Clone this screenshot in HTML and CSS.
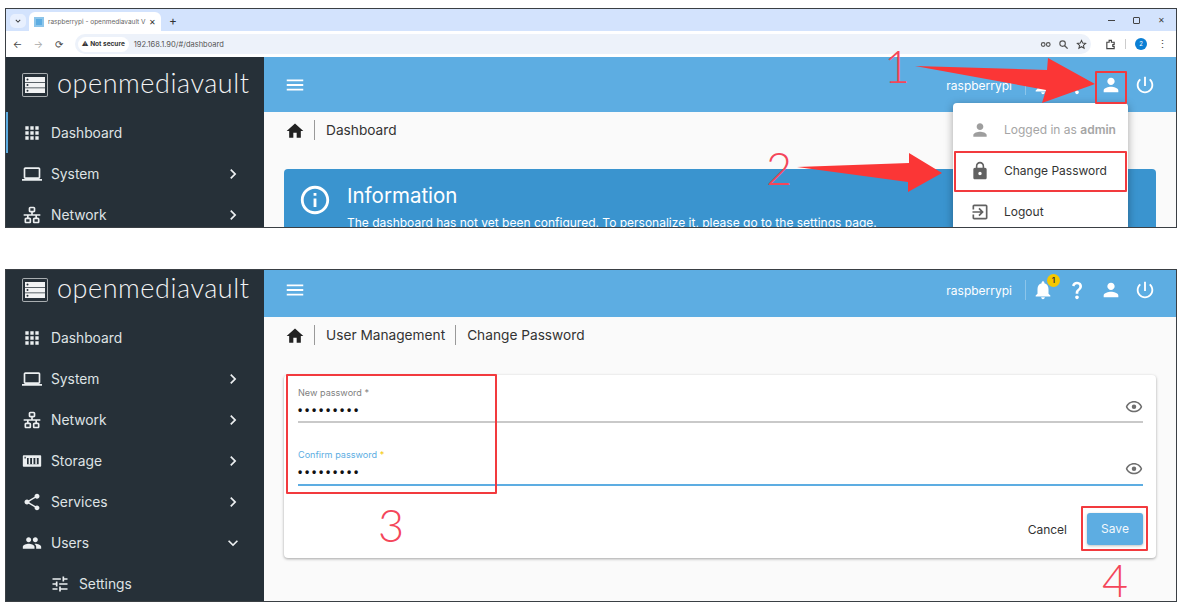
FILE: index.html
```html
<!doctype html>
<html lang="en">
<head>
	<meta charset="utf-8">
	<title>openmediavault change password</title>
	<link rel="stylesheet" href="styles.css">
</head>

<body>
	<svg class="defs" aria-hidden="true">
		<symbol id="i-apps" viewBox="0 0 24 24"><path d="M4 8h4V4H4v4zm6 12h4v-4h-4v4zm-6 0h4v-4H4v4zm0-6h4v-4H4v4zm6 0h4v-4h-4v4zm6-10v4h4V4h-4zm-6 4h4V4h-4v4zm6 6h4v-4h-4v4zm0 6h4v-4h-4v4z"/></symbol>
		<symbol id="i-laptop" viewBox="0 0 24 24"><path d="M20 18c1.1 0 1.99-.9 1.99-2L22 6c0-1.1-.9-2-2-2H4c-1.1 0-2 .9-2 2v10c0 1.1.9 2 2 2H0v2h24v-2h-4zM4 6h16v10H4V6z"/></symbol>
		<symbol id="i-lan" viewBox="0 0 24 24"><path d="M10,2C8.89,2 8,2.89 8,4V7C8,8.11 8.89,9 10,9H11V11H2V13H6V15H5C3.89,15 3,15.89 3,17V20C3,21.11 3.89,22 5,22H9C10.11,22 11,21.11 11,20V17C11,15.89 10.11,15 9,15H8V13H16V15H15C13.89,15 13,15.89 13,17V20C13,21.11 13.89,22 15,22H19C20.11,22 21,21.11 21,20V17C21,15.89 20.11,15 19,15H18V13H22V11H13V9H14C15.11,9 16,8.11 16,7V4C16,2.89 15.11,2 14,2H10M10,4H14V7H10V4M5,17H9V20H5V17M15,17H19V20H15V17Z"/></symbol>
		<symbol id="i-storage" viewBox="0 0 24 24"><path fill-rule="evenodd" d="M2 5h20c.6 0 1 .4 1 1v12c0 .6-.4 1-1 1H2c-.6 0-1-.4-1-1V6c0-.6.4-1 1-1zm4 3.5V16h14V8.5H6zM3 7v2h1.5V7H3z"/><rect x="8" y="8.5" width="1.8" height="7.5"/><rect x="12" y="8.5" width="1.8" height="7.5"/><rect x="16" y="8.5" width="1.8" height="7.5"/></symbol>
		<symbol id="i-share" viewBox="0 0 24 24"><path d="M18 16.08c-.76 0-1.44.3-1.96.77L8.91 12.7c.05-.23.09-.46.09-.7s-.04-.47-.09-.7l7.05-4.11c.54.5 1.25.81 2.04.81 1.66 0 3-1.34 3-3s-1.34-3-3-3-3 1.34-3 3c0 .24.04.47.09.7L8.04 9.81C7.5 9.31 6.79 9 6 9c-1.66 0-3 1.34-3 3s1.34 3 3 3c.79 0 1.5-.31 2.04-.81l7.12 4.16c-.05.21-.08.43-.08.65 0 1.61 1.31 2.92 2.92 2.92 1.61 0 2.92-1.31 2.92-2.92s-1.31-2.92-2.92-2.92z"/></symbol>
		<symbol id="i-group" viewBox="0 0 24 24"><path d="M16 11c1.66 0 2.99-1.34 2.99-3S17.66 5 16 5c-1.66 0-3 1.34-3 3s1.34 3 3 3zm-8 0c1.66 0 2.99-1.34 2.99-3S9.66 5 8 5C6.34 5 5 6.34 5 8s1.34 3 3 3zm0 2c-2.33 0-7 1.17-7 3.5V19h14v-2.5c0-2.33-4.67-3.5-7-3.5zm8 0c-.29 0-.62.02-.97.05 1.16.84 1.97 1.97 1.97 3.45V19h6v-2.5c0-2.33-4.67-3.5-7-3.5z"/></symbol>
		<symbol id="i-tune" viewBox="0 0 24 24"><path d="M3 17v2h6v-2H3zM3 5v2h10V5H3zm10 16v-2h8v-2h-8v-2h-2v6h2zM7 9v2H3v2h4v2h2V9H7zm14 4v-2H11v2h10zm-6-4h2V7h4V5h-4V3h-2v6z"/></symbol>
		<symbol id="i-right" viewBox="0 0 24 24"><path d="M10 6L8.59 7.41 13.17 12l-4.58 4.59L10 18l6-6z"/></symbol>
		<symbol id="i-down" viewBox="0 0 24 24"><path d="M16.59 8.59L12 13.17 7.41 8.59 6 10l6 6 6-6z"/></symbol>
		<symbol id="i-menu" viewBox="0 0 24 24"><path d="M3 18h18v-2H3v2zm0-5h18v-2H3v2zm0-7v2h18V6H3z"/></symbol>
		<symbol id="i-home" viewBox="0 0 24 24"><path d="M10 20v-6h4v6h5v-8h3L12 3 2 12h3v8z"/></symbol>
		<symbol id="i-person" viewBox="0 0 24 24"><path d="M12 12c2.21 0 4-1.79 4-4s-1.79-4-4-4-4 1.79-4 4 1.79 4 4 4zm0 2c-2.67 0-8 1.34-8 4v2h16v-2c0-2.66-5.33-4-8-4z"/></symbol>
		<symbol id="i-lock" viewBox="0 0 24 24"><path d="M18 8h-1V6c0-2.76-2.24-5-5-5S7 3.24 7 6v2H6c-1.1 0-2 .9-2 2v10c0 1.1.9 2 2 2h12c1.1 0 2-.9 2-2V10c0-1.1-.9-2-2-2zm-6 9c-1.1 0-2-.9-2-2s.9-2 2-2 2 .9 2 2-.9 2-2 2zm3.1-9H8.9V6c0-1.71 1.39-3.1 3.1-3.1 1.71 0 3.1 1.39 3.1 3.1v2z"/></symbol>
		<symbol id="i-logout" viewBox="0 0 24 24"><path d="M10.09 15.59L11.5 17l5-5-5-5-1.41 1.41L12.67 11H3v2h9.67l-2.58 2.59zM19 3H5c-1.11 0-2 .9-2 2v4h2V5h14v14H5v-4H3v4c0 1.1.89 2 2 2h14c1.1 0 2-.9 2-2V5c0-1.1-.9-2-2-2z"/></symbol>
		<symbol id="i-power" viewBox="0 0 24 24"><path d="M13 3h-2v10h2V3zm4.83 2.17l-1.42 1.42C17.99 7.86 19 9.81 19 12c0 3.87-3.13 7-7 7s-7-3.13-7-7c0-2.19 1.01-4.14 2.58-5.42L6.17 5.17C4.23 6.82 3 9.26 3 12c0 4.97 4.03 9 9 9s9-4.03 9-9c0-2.74-1.23-5.18-3.17-6.83z"/></symbol>
		<symbol id="i-bell" viewBox="0 0 24 24"><path d="M12 22c1.1 0 2-.9 2-2h-4c0 1.1.89 2 2 2zm6-6v-5c0-3.07-1.64-5.64-4.5-6.32V4c0-.83-.67-1.5-1.5-1.5s-1.5.67-1.5 1.5v.68C7.63 5.36 6 7.92 6 11v5l-2 2v1h16v-1l-2-2z"/></symbol>
		<symbol id="i-help" viewBox="0 0 24 24"><path d="M11.07 12.85c.77-1.39 2.25-2.21 3.11-3.44.91-1.29.4-3.7-2.18-3.7-1.69 0-2.52 1.28-2.87 2.34L6.54 6.96C7.25 4.83 9.18 3 11.99 3c2.35 0 3.96 1.07 4.78 2.41.7 1.15 1.11 3.3.03 4.9-1.2 1.77-2.35 2.31-2.97 3.45-.25.46-.35.76-.35 2.24h-2.89c-.01-.78-.13-2.05.48-3.15zM14 20c0 1.1-.9 2-2 2s-2-.9-2-2 .9-2 2-2 2 .9 2 2z"/></symbol>
		<symbol id="i-eye" viewBox="0 0 24 24"><path d="M12 6c3.79 0 7.17 2.13 8.82 5.5C19.17 14.87 15.79 17 12 17s-7.17-2.13-8.82-5.5C4.83 8.13 8.21 6 12 6m0-2C7 4 2.73 7.11 1 11.5 2.73 15.89 7 19 12 19s9.27-3.11 11-7.5C21.27 7.11 17 4 12 4z"/><circle cx="12" cy="11.5" r="3"/></symbol>
		<symbol id="i-info" viewBox="0 0 24 24"><path d="M11 7h2v2h-2zm0 4h2v6h-2zm1-9C6.48 2 2 6.48 2 12s4.48 10 10 10 10-4.48 10-10S17.52 2 12 2zm0 18c-4.41 0-8-3.59-8-8s3.59-8 8-8 8 3.59 8 8-3.59 8-8 8z"/></symbol>
		<symbol id="i-logo" viewBox="0 0 26 24"><path fill-rule="evenodd" fill="#a9aeb1" d="M2 0h22c1.1 0 2 .9 2 2v20c0 1.1-.9 2-2 2H2c-1.1 0-2-.9-2-2V2C0 .9.9 0 2 0zm0 1c-.6 0-1 .4-1 1v20c0 .6.4 1 1 1h22c.6 0 1-.4 1-1V2c0-.6-.4-1-1-1H2z"/><path fill-rule="evenodd" fill="#f2f3f4" d="M3 4h20v5H3V4zm0 5.8h20v4.6H3V9.8zm0 5.4h20V20H3v-4.800zM5.500 5.500a1 1 0 1 0 0 2 1 1 0 0 0 0-2zm0 5.600a1 1 0 1 0 0 2 1 1 0 0 0 0-2zm0 5.600a1 1 0 1 0 0 2 1 1 0 0 0 0-2z"/></symbol>
	</svg>

	<div class="page">
		<!-- first screenshot: dashboard with user menu -->
		<section class="shot shotTop">
			<div class="tabStrip">
				<span class="tabList"><svg class="ico10"><use href="#i-down"/></svg></span>
				<div class="tab">
					<span class="favicon"></span>
					<span class="tabTitle">raspberrypi - openmediavault V</span>
					<span class="tabClose">✕</span>
				</div>
				<span class="newTab">+</span>
				<div class="winControls">
					<span class="winMin"></span>
					<span class="winMax"></span>
					<span class="winClose">✕</span>
				</div>
			</div>
			<div class="toolbar">
				<span class="navBtn">←</span>
				<span class="navBtn faded">→</span>
				<span class="navBtn">⟳</span>
				<div class="omnibox">
					<span class="chip">⚠ <b>Not secure</b></span>
					<span class="url">192.168.1.90/#/dashboard</span>
					<span class="omniIcons">
						<svg class="ico11" viewBox="0 0 24 24"><circle cx="7" cy="12" r="4" fill="none" stroke="#555" stroke-width="2.5"/><circle cx="18" cy="12" r="4" fill="none" stroke="#555" stroke-width="2.5"/></svg>
						<svg class="ico11" viewBox="0 0 24 24"><circle cx="10" cy="10" r="6" fill="none" stroke="#555" stroke-width="2.5"/><path d="M14 14l7 7" stroke="#555" stroke-width="3"/></svg>
						<svg class="ico11" viewBox="0 0 24 24"><path d="M12 3l2.7 6 6.3.6-4.800 4.200 1.500 6.400L12 16.800 6.300 20.200l1.500-6.400L3 9.600 9.300 9z" fill="none" stroke="#444" stroke-width="2.2"/></svg>
					</span>
				</div>
				<div class="toolIcons">
					<svg class="ico11" viewBox="0 0 24 24"><path d="M4 7h5V3h5v4h6v5h-3v4h3v5H4z" fill="none" stroke="#444" stroke-width="2.5"/></svg>
					<span class="toolSep"></span>
					<span class="avatar">2</span>
					<span class="kebab">⋮</span>
				</div>
			</div>

			<div class="app">
				<aside class="sidebar">
					<div class="brand"><svg class="brandIcon"><use href="#i-logo"/></svg><span class="brandName">openmediavault</span></div>
					<nav>
						<a class="navRow active"><svg class="ico20"><use href="#i-apps"/></svg><span>Dashboard</span></a>
						<a class="navRow"><svg class="ico20"><use href="#i-laptop"/></svg><span>System</span><svg class="chev"><use href="#i-right"/></svg></a>
						<a class="navRow"><svg class="ico20"><use href="#i-lan"/></svg><span>Network</span><svg class="chev"><use href="#i-right"/></svg></a>
					</nav>
				</aside>
				<main class="main">
					<header class="topbar">
						<svg class="ico22"><use href="#i-menu"/></svg>
						<div class="topRight">
							<span class="hostname">raspberrypi</span>
							<span class="topSep"></span>
							<span class="bell"><svg class="ico22"><use href="#i-bell"/></svg><span class="badge">1</span></span>
							<svg class="ico22"><use href="#i-help"/></svg>
							<svg class="ico22"><use href="#i-person"/></svg>
							<svg class="ico22"><use href="#i-power"/></svg>
						</div>
					</header>
					<div class="crumbs">
						<svg class="ico20 homeIcon"><use href="#i-home"/></svg>
						<span class="crumb">Dashboard</span>
					</div>
					<div class="alert">
						<svg class="alertIcon"><use href="#i-info"/></svg>
						<div>
							<h2>Information</h2>
							<p>The dashboard has not yet been configured. To personalize it, please go to the settings page.</p>
						</div>
					</div>
				</main>
			</div>

			<div class="userMenu">
				<div class="menuRow muted"><svg class="ico20"><use href="#i-person"/></svg><span>Logged in as <b>admin</b></span></div>
				<div class="menuRow"><svg class="ico20"><use href="#i-lock"/></svg><span>Change Password</span></div>
				<div class="menuRow"><svg class="ico20"><use href="#i-logout"/></svg><span>Logout</span></div>
			</div>
		</section>

		<!-- second screenshot: change password form -->
		<section class="shot shotBottom">
			<div class="app">
				<aside class="sidebar">
					<div class="brand"><svg class="brandIcon"><use href="#i-logo"/></svg><span class="brandName">openmediavault</span></div>
					<nav>
						<a class="navRow"><svg class="ico20"><use href="#i-apps"/></svg><span>Dashboard</span></a>
						<a class="navRow"><svg class="ico20"><use href="#i-laptop"/></svg><span>System</span><svg class="chev"><use href="#i-right"/></svg></a>
						<a class="navRow"><svg class="ico20"><use href="#i-lan"/></svg><span>Network</span><svg class="chev"><use href="#i-right"/></svg></a>
						<a class="navRow"><svg class="ico20"><use href="#i-storage"/></svg><span>Storage</span><svg class="chev"><use href="#i-right"/></svg></a>
						<a class="navRow"><svg class="ico20"><use href="#i-share"/></svg><span>Services</span><svg class="chev"><use href="#i-right"/></svg></a>
						<a class="navRow"><svg class="ico20"><use href="#i-group"/></svg><span>Users</span><svg class="chev"><use href="#i-down"/></svg></a>
						<a class="navRow sub"><svg class="ico20"><use href="#i-tune"/></svg><span>Settings</span></a>
					</nav>
				</aside>
				<main class="main">
					<header class="topbar">
						<svg class="ico22"><use href="#i-menu"/></svg>
						<div class="topRight">
							<span class="hostname">raspberrypi</span>
							<span class="topSep"></span>
							<span class="bell"><svg class="ico22"><use href="#i-bell"/></svg><span class="badge">1</span></span>
							<svg class="ico22"><use href="#i-help"/></svg>
							<svg class="ico22"><use href="#i-person"/></svg>
							<svg class="ico22"><use href="#i-power"/></svg>
						</div>
					</header>
					<div class="crumbs">
						<svg class="ico20 homeIcon"><use href="#i-home"/></svg>
						<span class="crumb">User Management</span>
						<span class="crumb">Change Password</span>
					</div>
					<form class="formCard">
						<div class="field">
							<div class="fieldText">
								<label>New password *</label>
								<span class="dots">•••••••••</span>
							</div>
							<svg class="eye"><use href="#i-eye"/></svg>
						</div>
						<div class="field focused">
							<div class="fieldText">
								<label>Confirm password <i>*</i></label>
								<span class="dots">•••••••••</span>
							</div>
							<svg class="eye"><use href="#i-eye"/></svg>
						</div>
						<div class="formActions">
							<span class="btnCancel">Cancel</span>
							<span class="btnSave">Save</span>
						</div>
					</form>
				</main>
			</div>
		</section>

		<!-- annotations drawn over the screenshots -->
		<svg class="arrows" viewBox="0 0 1182 607">
			<polygon points="915,66 1047,70 1048,58 1095,84 1042,103 1046,90"/>
			<polygon points="797,167 909,163 909,153 942,173 908,192 908,182"/>
		</svg>
		<span class="redBox boxUser"></span>
		<span class="redBox boxChange"></span>
		<span class="redBox boxFields"></span>
		<span class="redBox boxSave"></span>
		<span class="stepNo no1">1</span>
		<span class="stepNo no2">2</span>
		<span class="stepNo no3">3</span>
		<span class="stepNo no4">4</span>
	</div>
</body>
</html>
```
FILE: styles.css
```css
* {
	margin: 0;
	padding: 0;
	box-sizing: border-box;
}

body {
	background-color: #fff;
	font-family: Inter, "Liberation Sans", sans-serif;
	overflow: hidden;
}

.defs {
	width: 0;
	height: 0;
	display: block;
}

.page {
	position: relative;
	width: 1182px;
	height: 607px;
	padding: 8px 5px 0;
	display: flex;
	flex-direction: column;
	gap: 41px;
}

.shot {
	position: relative;
	border: 1px solid #3a3f44;
	overflow: hidden;
	background-color: #fafafa;
}
.shotTop {
	height: 220px;
}
.shotBottom {
	height: 333px;
}
.shotBottom .app {
	margin-top: -8px;
	height: 340px;
}

/* browser chrome */
.tabStrip {
	height: 22px;
	background-color: #d3e3fd;
	display: flex;
	align-items: flex-end;
}
.tabList {
	width: 16px;
	height: 14px;
	margin: 0 3px 3px 4px;
	border-radius: 5px;
	background-color: #e8f0fe;
	display: flex;
	align-items: center;
	justify-content: center;
}
.tab {
	width: 132px;
	height: 19px;
	background-color: #fff;
	border-radius: 6px 6px 0 0;
	display: flex;
	align-items: center;
	padding: 0 5px;
}
.favicon {
	width: 10px;
	height: 10px;
	margin-right: 4px;
	flex: none;
	background-color: #5dade2;
	border: 2px solid #8cc5ea;
}
.tabTitle {
	flex: 1;
	font-size: 6.5px;
	color: #666;
	white-space: nowrap;
}
.tabClose {
	font-size: 8px;
	color: #333;
}
.newTab {
	margin: 0 0 3px 8px;
	font-size: 12px;
	line-height: 14px;
	color: #333;
}
.winControls {
	margin-left: auto;
	height: 22px;
	padding-right: 11px;
	display: flex;
	align-items: center;
	gap: 18px;
}
.winMin {
	width: 7px;
	height: 1px;
	background-color: #444;
}
.winMax {
	width: 7px;
	height: 7px;
	border: 1px solid #444;
	border-radius: 1px;
}
.winClose {
	font-size: 8px;
	color: #444;
}

.toolbar {
	height: 26px;
	background-color: #fff;
	display: flex;
	align-items: center;
	padding: 0 8px 0 1px;
}
.navBtn {
	width: 21px;
	text-align: center;
	font-size: 10px;
	color: #444;
}
.navBtn.faded {
	color: #aaa;
}
.omnibox {
	width: 1021px;
	height: 20px;
	margin-left: 5px;
	background-color: #edf2fa;
	border-radius: 10px;
	display: flex;
	align-items: center;
	padding: 0 4px 0 3px;
}
.chip {
	background-color: #fff;
	border-radius: 8px;
	width: 51px;
	height: 15px;
	text-align: center;
	font-size: 6.5px;
	line-height: 15px;
	color: #333;
	white-space: nowrap;
}
.url {
	margin-left: 5px;
	font-size: 7.5px;
	color: #555;
}
.omniIcons {
	margin-left: auto;
	display: flex;
	gap: 7px;
}
.toolIcons {
	flex: 1;
	display: flex;
	align-items: center;
	padding-left: 14px;
}
.toolSep {
	width: 1px;
	height: 10px;
	margin: 0 9px;
	background-color: #ccc;
}
.avatar {
	width: 12px;
	height: 12px;
	border-radius: 50%;
	background-color: #0b7fd4;
	color: #fff;
	font-size: 6px;
	line-height: 12px;
	text-align: center;
}
.kebab {
	margin-left: 10px;
	font-size: 11px;
	color: #444;
}
.ico10 {
	width: 10px;
	height: 10px;
	fill: #333;
}
.ico11 {
	width: 11px;
	height: 11px;
}

/* openmediavault app */
.app {
	display: flex;
	height: 171px;
}
.sidebar {
	width: 258px;
	flex: none;
	background-color: #263038;
	color: #dfe3e5;
}
.brand {
	height: 55px;
	padding-left: 16px;
	display: flex;
	align-items: center;
	gap: 9px;
}
.brandIcon {
	width: 26px;
	height: 24px;
}
.brandName {
	font-family: Lato, sans-serif;
	font-weight: 300;
	font-size: 27px;
	letter-spacing: 0.55px;
	color: #f2f3f4;
	line-height: 1;
	margin-bottom: 5px;
}
.navRow {
	height: 41px;
	padding: 0 21px 0 16px;
	display: flex;
	align-items: center;
	gap: 9px;
	font-size: 13.8px;
	position: relative;
}
.navRow.active {
	border-left: 2px solid #5dade2;
	padding-left: 14px;
}
.navRow.sub {
	padding-left: 44px;
}
.navRow svg {
	fill: #eceff1;
	flex: none;
}
.navRow .chev {
	width: 20px;
	height: 20px;
	margin-left: auto;
}
.ico20 {
	width: 20px;
	height: 20px;
}
.ico22 {
	width: 22px;
	height: 22px;
	fill: #fff;
	display: block;
}

.main {
	flex: 1;
	min-width: 0;
}
.topbar {
	height: 55px;
	background-color: #5dade2;
	padding: 1px 20px 0 20px;
	display: flex;
	align-items: center;
	justify-content: space-between;
}
.topRight {
	display: flex;
	align-items: center;
	gap: 12px;
}
.hostname {
	font-size: 12px;
	color: #fff;
}
.topSep {
	width: 1px;
	height: 20px;
	margin-left: 1px;
	background-color: #8cc5ea;
}
.bell {
	position: relative;
	margin-left: -6px;
}
.badge {
	position: absolute;
	top: -5px;
	right: -6px;
	width: 13px;
	height: 13px;
	border-radius: 50%;
	background-color: #f5c800;
	color: #333;
	font-size: 8px;
	font-weight: 600;
	line-height: 13px;
	text-align: center;
}

.crumbs {
	height: 36px;
	padding-left: 21px;
	display: flex;
	align-items: center;
	color: #333;
	font-size: 13.7px;
}
.homeIcon {
	fill: #222;
	margin: 1px -1px 0 0;
}
.crumb {
	margin-left: 10px;
	padding-left: 11px;
	border-left: 1px solid #999;
	line-height: 20px;
}

.alert {
	margin: 21px 20px 0;
	height: 100px;
	padding: 14px 17px;
	background-color: #3a94cf;
	border-radius: 4px;
	color: #fff;
	display: flex;
	gap: 15px;
}
.alertIcon {
	width: 34px;
	height: 34px;
	fill: #fff;
	margin: 0 0 0 -3px;
	flex: none;
}
.alert h2 {
	font-size: 20.5px;
	font-weight: 400;
	line-height: 26px;
}
.alert p {
	font-size: 12px;
	line-height: 27px;
}

.userMenu {
	position: absolute;
	left: 947px;
	top: 94px;
	width: 175px;
	background-color: #fff;
	border-radius: 4px;
	padding-top: 6px;
	box-shadow: 0 2px 8px rgba(0,0,0,0.35);
}
.menuRow {
	height: 41px;
	padding-left: 17px;
	display: flex;
	align-items: center;
	gap: 14px;
	font-size: 12px;
	color: #333;
}
.menuRow svg {
	fill: #616161;
	flex: none;
}
.menuRow.muted {
	color: #a5a5a5;
}
.menuRow.muted svg {
	fill: #9e9e9e;
}
.menuRow.muted b {
	font-weight: 600;
}

/* change password form */
.formCard {
	margin: 22px 20px 0;
	padding: 12px 13px 13px 14px;
	background-color: #fff;
	border-radius: 4px;
	box-shadow: 0 1px 3px rgba(0,0,0,0.35);
}
.field {
	height: 36px;
	display: flex;
	align-items: flex-end;
	justify-content: space-between;
	padding-bottom: 5px;
	border-bottom: 2px solid #c9c9c9;
}
.field.focused {
	height: 37px;
	margin-top: 26px;
	padding-bottom: 6px;
	border-bottom-color: #5dade2;
}
.fieldText {
	display: flex;
	flex-direction: column;
}
.field label {
	font-size: 9.1px;
	line-height: 12px;
	color: #7f7f7f;
	height: 17px;
}
.field.focused label {
	color: #5dade2;
}
.field.focused i {
	color: #f5c800;
	font-style: normal;
}
.dots {
	font-family: "Liberation Sans", sans-serif;
	font-size: 12px;
	font-weight: 700;
	line-height: 12px;
	letter-spacing: 2.8px;
	color: #111;
}
.eye {
	width: 18px;
	height: 18px;
	fill: #6e6e6e;
}
.formActions {
	margin-top: 27px;
	display: flex;
	justify-content: flex-end;
	align-items: center;
	gap: 20px;
}
.btnCancel {
	font-size: 12px;
	color: #333;
}
.btnSave {
	width: 56px;
	height: 32px;
	background-color: #5dade2;
	border-radius: 3px;
	color: #f2f8fc;
	font-size: 12px;
	line-height: 32px;
	text-align: center;
	box-shadow: 0 1px 3px rgba(0,0,0,0.25);
}

/* annotations */
.arrows {
	position: absolute;
	left: 0;
	top: 0;
	width: 1182px;
	height: 607px;
	fill: #fb3636;
	pointer-events: none;
}
.redBox {
	position: absolute;
	border: 2px solid #f23a3e;
	border-radius: 1px;
}
.boxUser {
	left: 1095px;
	top: 71px;
	width: 32px;
	height: 33px;
}
.boxChange {
	left: 954px;
	top: 151px;
	width: 173px;
	height: 41px;
}
.boxFields {
	left: 286px;
	top: 374px;
	width: 211px;
	height: 120px;
}
.boxSave {
	left: 1081px;
	top: 506px;
	width: 67px;
	height: 45px;
}
.stepNo {
	position: absolute;
	font-family: Lato, sans-serif;
	font-weight: 300;
	font-size: 45px;
	line-height: 46px;
	color: #f4465a;
}
.no1 {
	left: 884px;
	top: 43px;
}
.no2 {
	left: 766px;
	top: 145px;
}
.no3 {
	left: 378px;
	top: 502px;
}
.no4 {
	left: 1102px;
	top: 557px;
}
```
